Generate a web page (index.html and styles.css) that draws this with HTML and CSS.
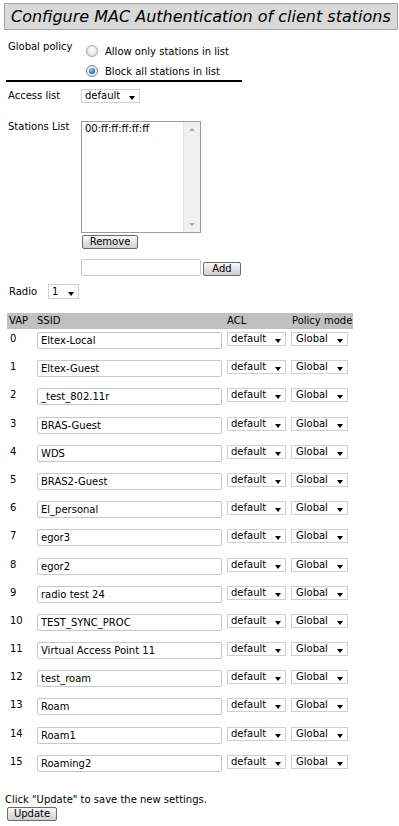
FILE: index.html
```html
<!DOCTYPE html>
<html>
<head>
<meta charset="utf-8">
<link rel="stylesheet" href="styles.css">
</head>
<body>
<div class="title">Configure MAC Authentication of client stations</div>

<div class="policy">
  <div class="policy-lbl">Global policy</div>
  <div class="opts">
    <div class="opt"><span class="radio"></span><span class="otxt">Allow only stations in list</span></div>
    <div class="opt"><span class="radio checked"></span><span class="otxt">Block all stations in list</span></div>
  </div>
</div>
<div class="rule"></div>

<div class="access">
  <span class="lbl">Access list</span>
  <span class="sel sel-access">default<i class="arr"></i></span>
</div>

<div class="stations">
  <span class="lbl">Stations List</span>
  <div class="listbox">
    <div class="items">00:ff:ff:ff:ff:ff</div>
    <div class="scroll"><i class="up"></i><i class="down"></i></div>
  </div>
</div>
<button class="btn remove">Remove</button>
<div class="addrow">
  <span class="text mac"></span>
  <button class="btn add">Add</button>
</div>

<div class="radiorow">
  <span class="lbl">Radio</span>
  <span class="sel sel-radio">1<i class="arr"></i></span>
</div>

<div class="vap">
  <div class="h h-vap">VAP</div><div class="h">SSID</div><div class="h">ACL</div><div class="h h-pol">Policy mode</div>

  <div class="num">0</div><div class="c"><span class="text ssid">Eltex-Local</span></div><div class="c"><span class="sel acl">default<i class="arr"></i></span></div><div class="c"><span class="sel pol">Global<i class="arr"></i></span></div>
  <div class="num">1</div><div class="c"><span class="text ssid">Eltex-Guest</span></div><div class="c"><span class="sel acl">default<i class="arr"></i></span></div><div class="c"><span class="sel pol">Global<i class="arr"></i></span></div>
  <div class="num">2</div><div class="c"><span class="text ssid">_test_802.11r</span></div><div class="c"><span class="sel acl">default<i class="arr"></i></span></div><div class="c"><span class="sel pol">Global<i class="arr"></i></span></div>
  <div class="num">3</div><div class="c"><span class="text ssid">BRAS-Guest</span></div><div class="c"><span class="sel acl">default<i class="arr"></i></span></div><div class="c"><span class="sel pol">Global<i class="arr"></i></span></div>
  <div class="num">4</div><div class="c"><span class="text ssid">WDS</span></div><div class="c"><span class="sel acl">default<i class="arr"></i></span></div><div class="c"><span class="sel pol">Global<i class="arr"></i></span></div>
  <div class="num">5</div><div class="c"><span class="text ssid">BRAS2-Guest</span></div><div class="c"><span class="sel acl">default<i class="arr"></i></span></div><div class="c"><span class="sel pol">Global<i class="arr"></i></span></div>
  <div class="num">6</div><div class="c"><span class="text ssid">El_personal</span></div><div class="c"><span class="sel acl">default<i class="arr"></i></span></div><div class="c"><span class="sel pol">Global<i class="arr"></i></span></div>
  <div class="num">7</div><div class="c"><span class="text ssid">egor3</span></div><div class="c"><span class="sel acl">default<i class="arr"></i></span></div><div class="c"><span class="sel pol">Global<i class="arr"></i></span></div>
  <div class="num">8</div><div class="c"><span class="text ssid">egor2</span></div><div class="c"><span class="sel acl">default<i class="arr"></i></span></div><div class="c"><span class="sel pol">Global<i class="arr"></i></span></div>
  <div class="num">9</div><div class="c"><span class="text ssid">radio test 24</span></div><div class="c"><span class="sel acl">default<i class="arr"></i></span></div><div class="c"><span class="sel pol">Global<i class="arr"></i></span></div>
  <div class="num">10</div><div class="c"><span class="text ssid">TEST_SYNC_PROC</span></div><div class="c"><span class="sel acl">default<i class="arr"></i></span></div><div class="c"><span class="sel pol">Global<i class="arr"></i></span></div>
  <div class="num">11</div><div class="c"><span class="text ssid">Virtual Access Point 11</span></div><div class="c"><span class="sel acl">default<i class="arr"></i></span></div><div class="c"><span class="sel pol">Global<i class="arr"></i></span></div>
  <div class="num">12</div><div class="c"><span class="text ssid">test_roam</span></div><div class="c"><span class="sel acl">default<i class="arr"></i></span></div><div class="c"><span class="sel pol">Global<i class="arr"></i></span></div>
  <div class="num">13</div><div class="c"><span class="text ssid">Roam</span></div><div class="c"><span class="sel acl">default<i class="arr"></i></span></div><div class="c"><span class="sel pol">Global<i class="arr"></i></span></div>
  <div class="num">14</div><div class="c"><span class="text ssid">Roam1</span></div><div class="c"><span class="sel acl">default<i class="arr"></i></span></div><div class="c"><span class="sel pol">Global<i class="arr"></i></span></div>
  <div class="num">15</div><div class="c"><span class="text ssid">Roaming2</span></div><div class="c"><span class="sel acl">default<i class="arr"></i></span></div><div class="c"><span class="sel pol">Global<i class="arr"></i></span></div>
</div>

<div class="note">Click "Update" to save the new settings.</div>
<button class="btn update">Update</button>
</body>
</html>
```

FILE: styles.css
```css
html, body {
  margin: 0;
  padding: 0;
  background: #fff;
}
body {
  font-family: "DejaVu Sans", Verdana, sans-serif;
  font-size: 10px;
  line-height: 12px;
  color: #000;
}

.title {
  margin: 3px 1px 0 4px;
  height: 27px;
  box-sizing: border-box;
  border: 1px solid #a4a4a4;
  background: #d9d9d9;
  padding-left: 6px;
  font-size: 16px;
  font-style: italic;
  line-height: 25px;
  white-space: nowrap;
  overflow: hidden;
}

.policy {
  display: flex;
  margin-top: 11px;
}
.policy-lbl {
  width: 78px;
  padding-left: 8px;
}
.opts {
  display: flex;
  flex-direction: column;
}
.opt {
  display: flex;
  align-items: center;
  gap: 7px;
  height: 20px;
}
.opt:last-child {
  height: 19px;
}
.otxt {
  padding-top: 2px;
}
.radio {
  width: 12px;
  height: 12px;
  box-sizing: border-box;
  border-radius: 50%;
  border: 1px solid #a6a6a6;
  background: radial-gradient(circle at 50% 40%, #fdfdfd 0, #eaeaea 55%, #d2d2d2 100%);
  display: flex;
  align-items: center;
  justify-content: center;
}
.radio.checked {
  border-color: #7a8a99;
}
.radio.checked::after {
  content: "";
  width: 6px;
  height: 6px;
  border-radius: 50%;
  background: radial-gradient(circle at 40% 35%, #9fd4f5 0, #2a86c8 50%, #134f86 100%);
}

.rule {
  margin-left: 6px;
  width: 236px;
  height: 2px;
  background: #000;
}

.access {
  display: flex;
  align-items: center;
  margin-top: 7px;
  padding-left: 8px;
}
.access .lbl {
  width: 73px;
}

.sel {
  display: flex;
  align-items: center;
  box-sizing: border-box;
  height: 14px;
  border: 1px solid #d0d0d0;
  background: #fff;
  padding-left: 3px;
  white-space: nowrap;
}
.arr {
  margin-left: auto;
  margin-right: 4px;
  align-self: flex-end;
  margin-bottom: 2px;
  width: 0;
  height: 0;
  border-left: 3.5px solid transparent;
  border-right: 3.5px solid transparent;
  border-top: 4px solid #000;
}
.sel-access {
  width: 59px;
}

.stations {
  display: flex;
  align-items: flex-start;
  margin-top: 18px;
  padding-left: 8px;
}
.stations .lbl {
  width: 73px;
}
.listbox {
  width: 120px;
  height: 112px;
  box-sizing: border-box;
  border: 1px solid #9c9c9c;
  display: flex;
  background: #fff;
}
.items {
  flex: 1;
  padding: 1px 3px;
}
.scroll {
  width: 17px;
  background: #f0f0f0;
  border-left: 1px solid #e4e4e4;
  display: flex;
  flex-direction: column;
  justify-content: space-between;
  align-items: center;
  padding: 6px 0 6px;
  box-sizing: border-box;
}
.up {
  width: 0;
  height: 0;
  border-left: 3px solid transparent;
  border-right: 3px solid transparent;
  border-bottom: 3px solid #a8a8a8;
}
.down {
  width: 0;
  height: 0;
  border-left: 3px solid transparent;
  border-right: 3px solid transparent;
  border-top: 3px solid #a8a8a8;
}

.btn {
  display: flex;
  align-items: center;
  justify-content: center;
  box-sizing: border-box;
  height: 14px;
  padding: 0;
  margin: 0;
  border: 1px solid #6a6a6a;
  border-radius: 2px;
  background: linear-gradient(#fafafa, #dedede 60%, #cfcfcf);
  font-family: inherit;
  font-size: 10px;
  line-height: 12px;
  color: #000;
}
.remove {
  margin: 2px 0 0 82px;
  width: 56px;
}

.text {
  display: block;
  box-sizing: border-box;
  height: 17px;
  border: 1px solid #c8c8c8;
  border-radius: 2px;
  padding: 0 3px;
  line-height: 15px;
  white-space: nowrap;
  overflow: hidden;
  background: #fff;
}
.addrow {
  display: flex;
  align-items: center;
  gap: 2px;
  margin: 10px 0 0 81px;
}
.mac {
  width: 120px;
}
.add {
  width: 38px;
  margin-top: 2px;
}

.radiorow {
  display: flex;
  align-items: center;
  margin-top: 8px;
  padding-left: 9px;
}
.radiorow .lbl {
  width: 39px;
}
.sel-radio {
  width: 31px;
  height: 15px;
}

.vap {
  display: grid;
  grid-template-columns: 30px 190px 64px 62px;
  grid-template-rows: 16px;
  grid-auto-rows: 28.2px;
  width: 346px;
  margin: 14px 0 0 7px;
}
.h {
  background: #c0c0c0;
  line-height: 16px;
  white-space: nowrap;
}
.h-vap {
  padding-left: 2px;
}
.h-pol {
  padding-left: 1px;
}
.num {
  padding: 4px 0 0 3px;
}
.c {
  padding-top: 3px;
}
.ssid {
  width: 185px;
}
.acl {
  width: 59px;
}
.pol {
  width: 57px;
  padding-left: 4px;
}

.note {
  margin: 14px 0 0 5px;
}
.update {
  margin: 1px 0 0 7px;
  width: 50px;
}
```
